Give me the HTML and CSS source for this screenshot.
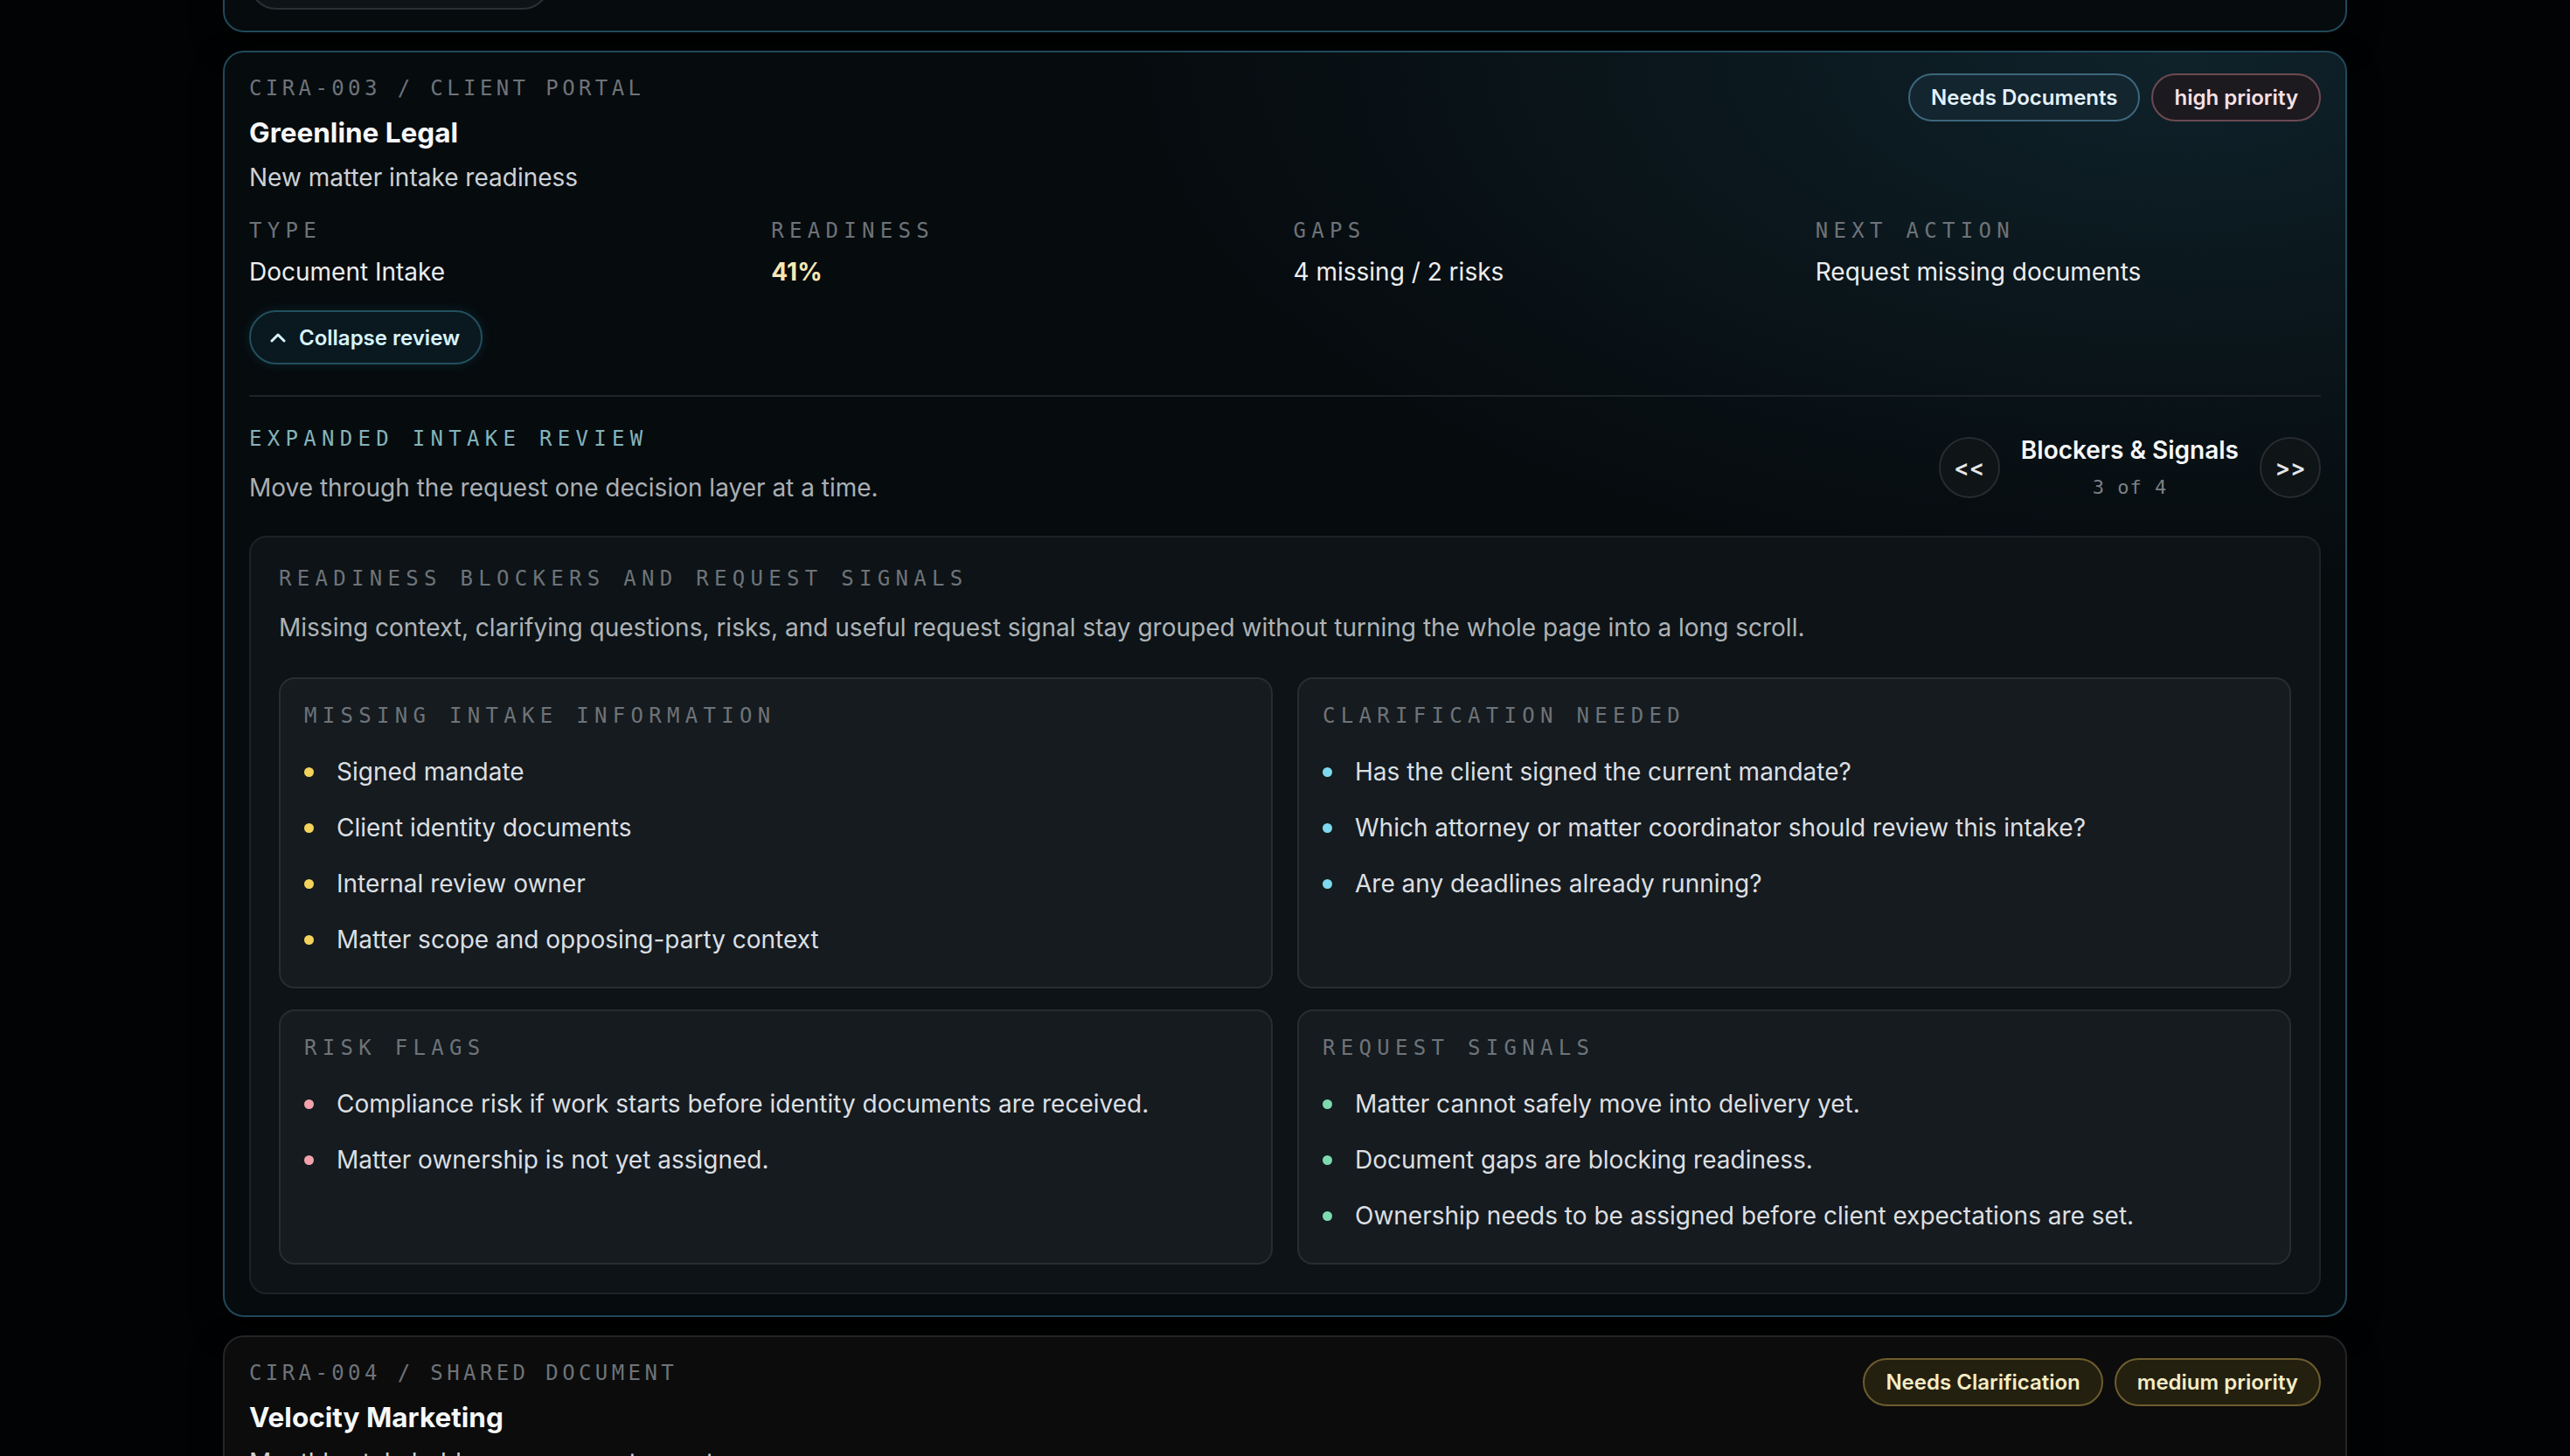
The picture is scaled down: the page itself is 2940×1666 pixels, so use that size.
FILE: index.html
```html
<!DOCTYPE html>
<html lang="en">
<head>
  <meta charset="UTF-8">
  <meta name="viewport" content="width=device-width, initial-scale=1.0">
  <title>Client Intake Review</title>
  <link rel="stylesheet" href="styles.css">
</head>
<body>
  <main class="feed">

    <article class="card card-teal card-tail">
      <button class="toggle toggle-muted" type="button">
        <svg width="18" height="12" viewBox="0 0 18 12"><path d="M2 3l7 7 7-7" fill="none" stroke="currentColor" stroke-width="3" stroke-linecap="round" stroke-linejoin="round"/></svg>
        Expand review
      </button>
    </article>

    <article class="card card-teal">
      <header class="card-head">
        <div>
          <p class="eyebrow">CIRA-003 / Client portal</p>
          <h3 class="card-title">Greenline Legal</h3>
          <p class="card-sub">New matter intake readiness</p>
        </div>
        <div class="badges">
          <span class="badge badge-blue">Needs Documents</span>
          <span class="badge badge-rose">high priority</span>
        </div>
      </header>

      <dl class="meta">
        <div><dt>Type</dt><dd>Document Intake</dd></div>
        <div><dt>Readiness</dt><dd class="score">41%</dd></div>
        <div><dt>Gaps</dt><dd>4 missing / 2 risks</dd></div>
        <div><dt>Next action</dt><dd>Request missing documents</dd></div>
      </dl>

      <button class="toggle" type="button">
        <svg width="18" height="12" viewBox="0 0 18 12"><path d="M2 10l7-7 7 7" fill="none" stroke="currentColor" stroke-width="3" stroke-linecap="round" stroke-linejoin="round"/></svg>
        Collapse review
      </button>

      <section class="review">
        <div class="review-head">
          <div>
            <p class="label kicker">Expanded intake review</p>
            <p class="review-note">Move through the request one decision layer at a time.</p>
          </div>
          <div class="stepper">
            <button class="step-btn" type="button">&lt;&lt;</button>
            <div class="step-title">
              <strong>Blockers &amp; Signals</strong>
              <span>3 of 4</span>
            </div>
            <button class="step-btn" type="button">&gt;&gt;</button>
          </div>
        </div>

        <div class="panel">
          <p class="label">Readiness blockers and request signals</p>
          <p class="panel-note">Missing context, clarifying questions, risks, and useful request signal stay grouped without turning the whole page into a long scroll.</p>

          <div class="groups">
            <div class="group">
              <p class="label">Missing intake information</p>
              <ul class="dots dots-amber">
                <li>Signed mandate</li>
                <li>Client identity documents</li>
                <li>Internal review owner</li>
                <li>Matter scope and opposing-party context</li>
              </ul>
            </div>
            <div class="group">
              <p class="label">Clarification needed</p>
              <ul class="dots dots-cyan">
                <li>Has the client signed the current mandate?</li>
                <li>Which attorney or matter coordinator should review this intake?</li>
                <li>Are any deadlines already running?</li>
              </ul>
            </div>
            <div class="group">
              <p class="label">Risk flags</p>
              <ul class="dots dots-rose">
                <li>Compliance risk if work starts before identity documents are received.</li>
                <li>Matter ownership is not yet assigned.</li>
              </ul>
            </div>
            <div class="group">
              <p class="label">Request signals</p>
              <ul class="dots dots-mint">
                <li>Matter cannot safely move into delivery yet.</li>
                <li>Document gaps are blocking readiness.</li>
                <li>Ownership needs to be assigned before client expectations are set.</li>
              </ul>
            </div>
          </div>
        </div>
      </section>
    </article>

    <article class="card card-plain">
      <header class="card-head">
        <div>
          <p class="eyebrow">CIRA-004 / Shared document</p>
          <h3 class="card-title">Velocity Marketing</h3>
          <p class="card-sub">Monthly stakeholder engagement report</p>
        </div>
        <div class="badges">
          <span class="badge badge-gold">Needs Clarification</span>
          <span class="badge badge-gold">medium priority</span>
        </div>
      </header>
    </article>

  </main>
</body>
</html>
```

FILE: styles.css
```css
* {
  box-sizing: border-box;
}
body {
  margin: 0;
  background-color: #020304;
  color: #e6e9eb;
  font-family: Inter, "Noto Sans", sans-serif;
  overflow: hidden;
}
p, h3, dl, dd, ul {
  margin: 0;
}
button {
  font-family: inherit;
  cursor: pointer;
}

.feed {
  max-width: 2430px;
  margin: -77px auto 0;
  display: flex;
  flex-direction: column;
  gap: 21px;
}

.card {
  border: 2px solid #21495a;
  border-radius: 24px;
  padding: 24px 28px;
  box-shadow: 0 14px 34px rgba(0, 0, 0, 0.6);
}
.card-teal {
  background: radial-gradient(ellipse 70% 60% at 92% 0%, rgba(24, 56, 70, 0.5), transparent 70%), #060b0e;
}
.card-plain {
  background-color: #0c0c0c;
  border-color: #232526;
}
.card-tail .toggle {
  margin-top: 0;
}

.card-head {
  display: flex;
  justify-content: space-between;
  align-items: flex-start;
}
.eyebrow,
.label,
.meta dt {
  font-family: "DejaVu Sans Mono", "Liberation Mono", monospace;
  font-size: 24px;
  line-height: 30px;
  text-transform: uppercase;
  color: #6e7379;
}
.eyebrow {
  margin-top: 2px;
  letter-spacing: 4.4px;
}
.label,
.meta dt {
  letter-spacing: 6.3px;
}
.card-title {
  margin-top: 17px;
  font-size: 31.5px;
  line-height: 38px;
  font-weight: 700;
  color: #f6f8f9;
}
.card-sub {
  margin-top: 12px;
  font-size: 28px;
  line-height: 40px;
  color: #cdd1d5;
}

.badges {
  display: flex;
  gap: 13px;
}
.badge {
  height: 55px;
  padding: 0 24px;
  border: 2px solid;
  border-radius: 999px;
  display: inline-flex;
  align-items: center;
  font-size: 24px;
  font-weight: 600;
}
.badge-blue {
  border-color: #3d677c;
  background-color: #13252f;
  color: #e3f1fa;
}
.badge-rose {
  border-color: #6c4a51;
  background-color: #1d1a1f;
  color: #f7e0e4;
}
.badge-gold {
  border-color: #6d5d2d;
  background-color: #232010;
  color: #f6ecc4;
}

.meta {
  margin-top: 28px;
  display: grid;
  grid-template-columns: repeat(4, 1fr);
  column-gap: 19px;
}
.meta dt {
  line-height: 26px;
}
.meta dd {
  margin-top: 14px;
  font-size: 28px;
  line-height: 40px;
  color: #eceef0;
}
.meta .score {
  font-weight: 700;
  color: #f7e7b4;
}

.toggle {
  margin-top: 24px;
  height: 62px;
  width: fit-content;
  padding: 0 24px 0 22px;
  border: 2px solid #22505f;
  border-radius: 999px;
  background-color: #0a1820;
  color: #d6f4fa;
  display: flex;
  align-items: center;
  gap: 15px;
  font-size: 24px;
  font-weight: 600;
  box-shadow: 0 0 14px rgba(40, 120, 140, 0.2);
}
.toggle-muted {
  width: 344px;
  border-color: #2a3135;
  background-color: #0d1316;
  color: #dfe3e6;
  box-shadow: none;
}

.review {
  margin-top: 35px;
  border-top: 2px solid #1d2427;
  padding-top: 33px;
}
.review-head {
  display: flex;
  justify-content: space-between;
  align-items: center;
}
.kicker {
  color: #84b3ba;
}
.review-note {
  margin-top: 21px;
  font-size: 28px;
  line-height: 40px;
  color: #a9afb4;
}
.stepper {
  margin-top: 5px;
  display: flex;
  align-items: center;
  gap: 24px;
}
.step-btn {
  width: 70px;
  height: 70px;
  border: 2px solid #262c30;
  border-radius: 50%;
  background-color: #0f1416;
  color: #e4e6e8;
  font-size: 26px;
  font-weight: 600;
  padding: 0;
}
.step-title {
  text-align: center;
}
.step-title strong {
  display: block;
  font-size: 28px;
  line-height: 34px;
  font-weight: 600;
  color: #f7f8f9;
}
.step-title span {
  display: block;
  margin-top: 12px;
  font-family: "DejaVu Sans Mono", "Liberation Mono", monospace;
  font-size: 22px;
  line-height: 28px;
  letter-spacing: 1px;
  color: #7b8085;
}

.panel {
  margin-top: 35px;
  border: 2px solid #1c2327;
  border-radius: 20px;
  background-color: #0d1316;
  padding: 32px;
}
.panel-note {
  margin-top: 21px;
  font-size: 28px;
  line-height: 40px;
  color: #adb3b8;
}
.groups {
  margin-top: 37px;
  display: grid;
  grid-template-columns: 1fr 1fr;
  gap: 24px 28px;
}
.group {
  border: 2px solid #262e32;
  border-radius: 18px;
  background-color: #151b1f;
  padding: 27px 27px 33px;
}

.dots {
  margin-top: 28px;
  padding: 0;
  list-style: none;
  display: flex;
  flex-direction: column;
  gap: 22px;
}
.dots li {
  display: flex;
  align-items: center;
  gap: 26px;
  font-size: 28px;
  line-height: 42px;
  color: #dcdfe2;
}
.dots li::before {
  content: "";
  flex: none;
  width: 11px;
  height: 11px;
  border-radius: 50%;
  background-color: var(--dot);
}
.dots-amber { --dot: #f3d35c; }
.dots-cyan { --dot: #7fd8ee; }
.dots-rose { --dot: #f2a2ac; }
.dots-mint { --dot: #7ddab0; }
```
